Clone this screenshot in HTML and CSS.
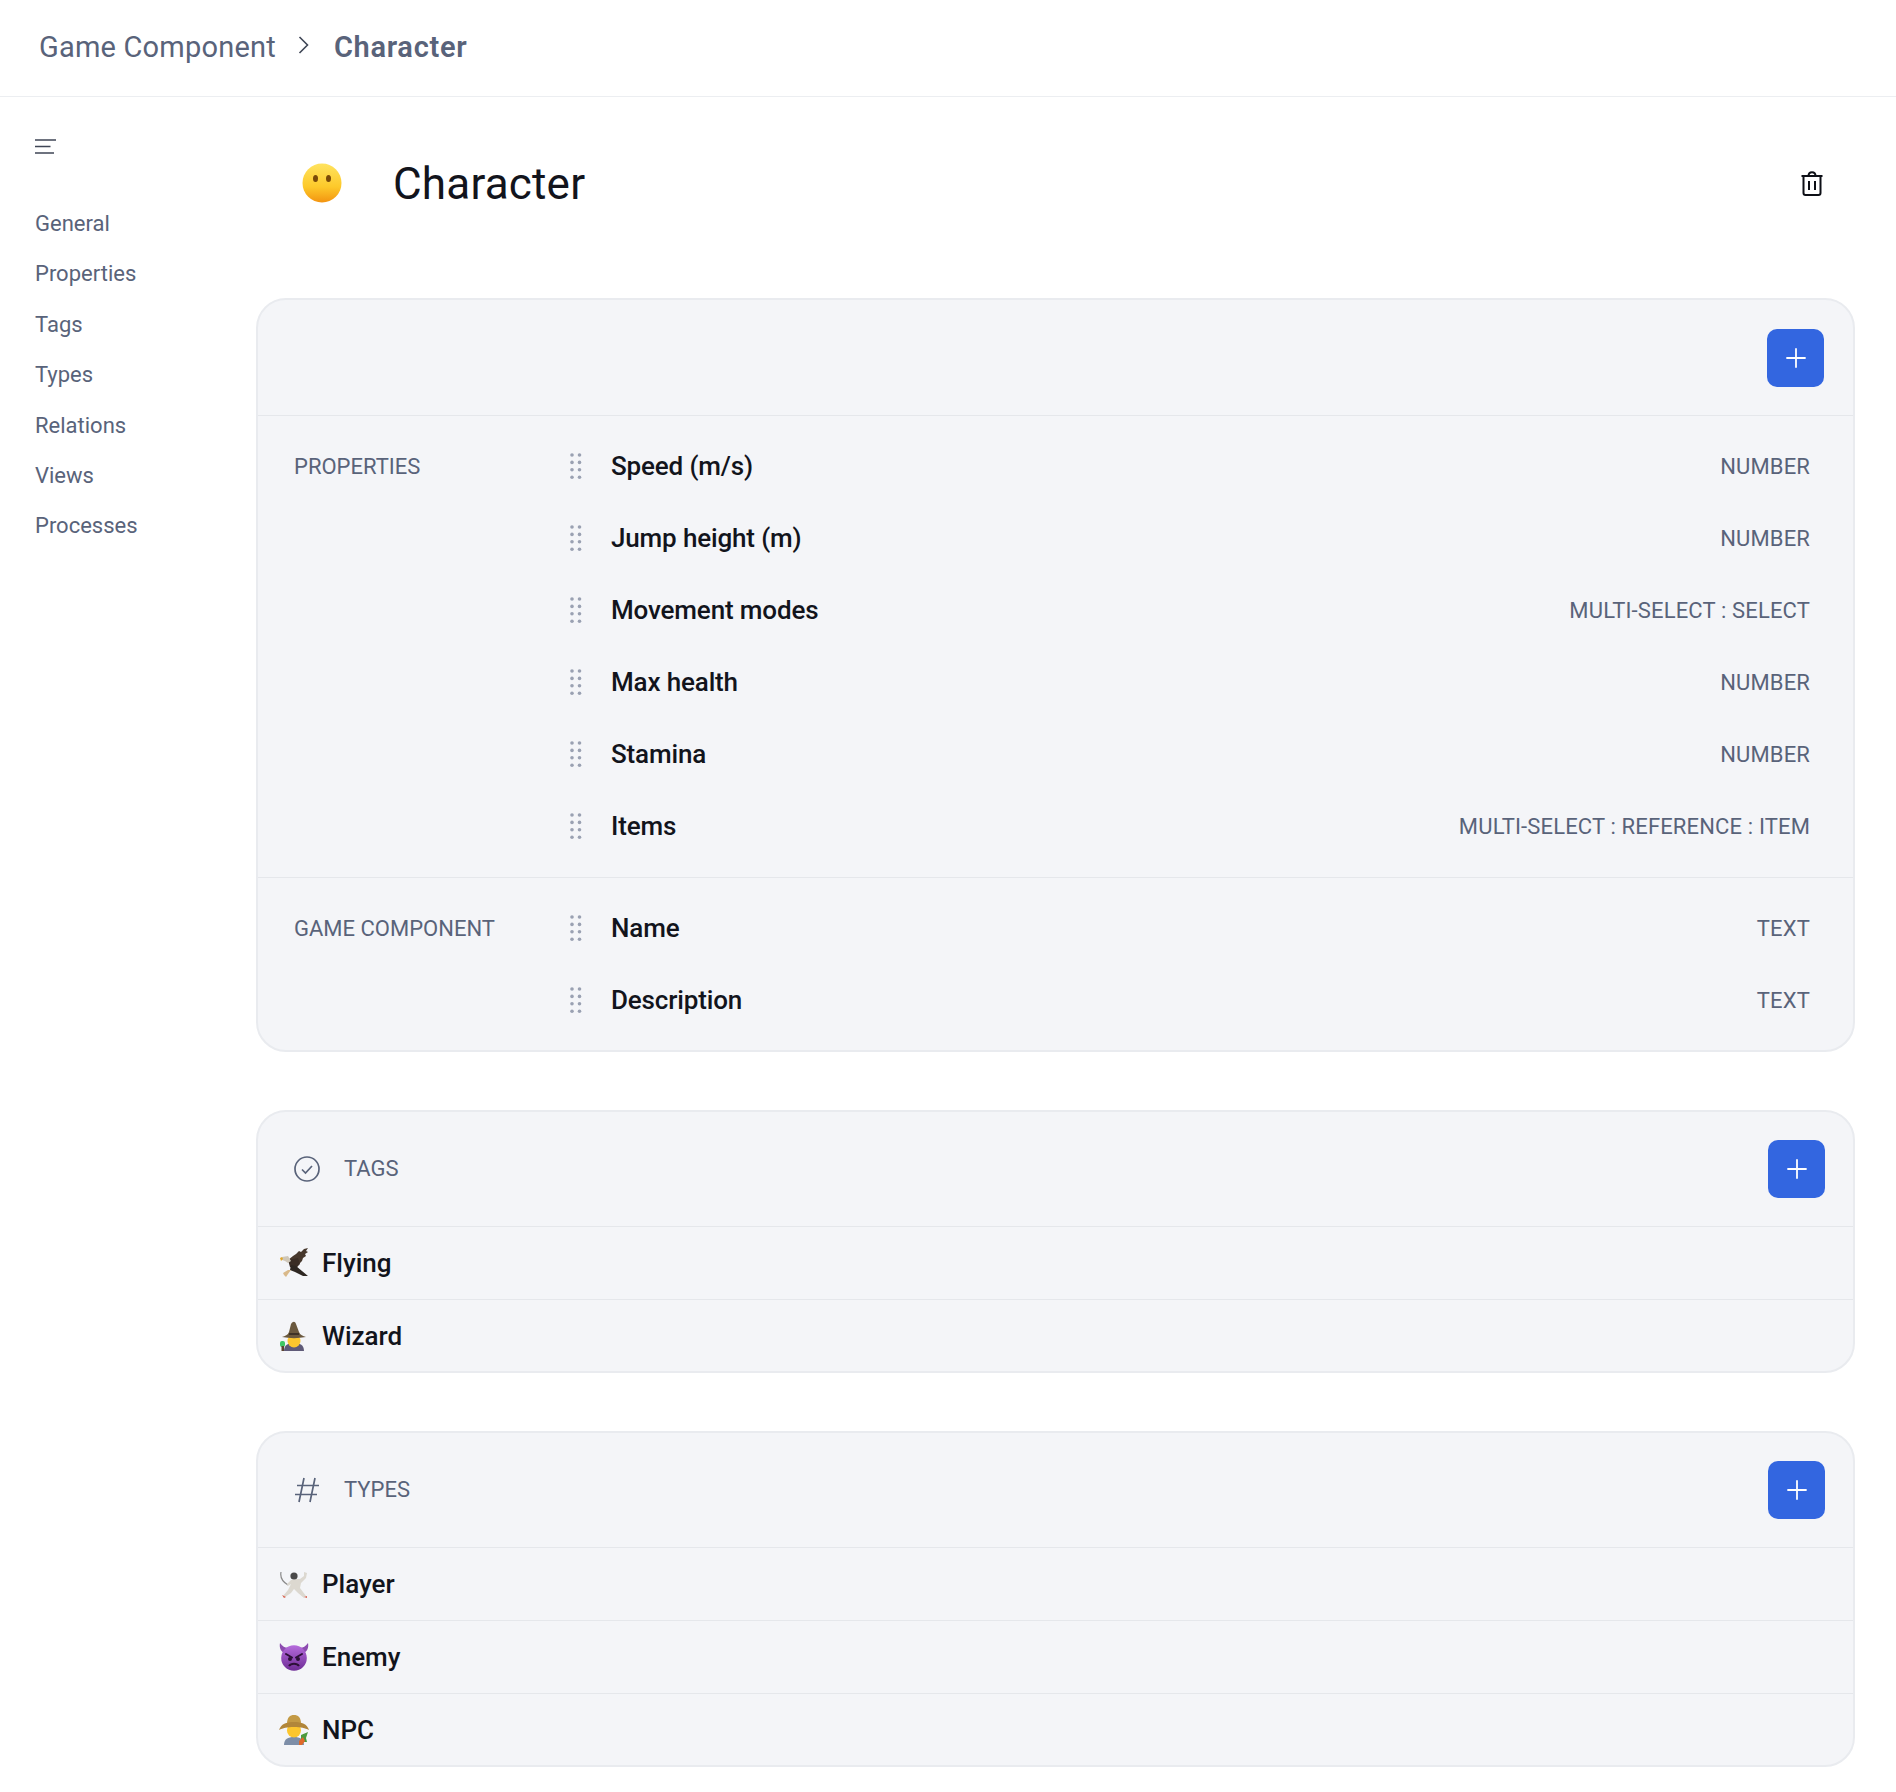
FILE: index.html
```html
<!DOCTYPE html>
<html lang="en">
<head>
<meta charset="utf-8">
<title>Character</title>
<link rel="stylesheet" href="styles.css">
</head>
<body>
<svg class="defs" width="0" height="0" aria-hidden="true">
  <defs>
    <g id="dots" fill="#9aa1b2">
      <circle cx="2" cy="2" r="1.8"/><circle cx="9.5" cy="2" r="1.8"/>
      <circle cx="2" cy="9.4" r="1.8"/><circle cx="9.5" cy="9.4" r="1.8"/>
      <circle cx="2" cy="16.8" r="1.8"/><circle cx="9.5" cy="16.8" r="1.8"/>
      <circle cx="2" cy="24.2" r="1.8"/><circle cx="9.5" cy="24.2" r="1.8"/>
    </g>
    <g id="plus" stroke="#fff" stroke-width="1.8" stroke-linecap="round">
      <path d="M10 1v18M1 10h18"/>
    </g>
    <linearGradient id="skin" x1="0" y1="0" x2="0" y2="1">
      <stop offset="0" stop-color="#ffe35f"/><stop offset="0.6" stop-color="#fdc92a"/><stop offset="1" stop-color="#f39410"/>
    </linearGradient>
    <linearGradient id="imp" x1="0" y1="0" x2="0" y2="1">
      <stop offset="0" stop-color="#b56bdc"/><stop offset="1" stop-color="#6e2c96"/>
    </linearGradient>
  </defs>
</svg>
<header class="topbar">
  <span class="crumb">Game Component</span>
  <svg class="crumb-sep" width="11" height="18" viewBox="0 0 11 18"><path d="M1.5 1 9.500 9 1.5 17" fill="none" stroke="#3f4656" stroke-width="1.6"/></svg>
  <span class="crumb crumb-current">Character</span>
</header>
<div class="layout">
  <nav class="sidenav">
    <svg class="menu-icon" width="22" height="15" viewBox="0 0 22 15"><path d="M0 1h21M0 7.500h15.500M0 14h19" stroke="#3f4656" stroke-width="1.7"/></svg>
    <a class="nav-link">General</a>
    <a class="nav-link">Properties</a>
    <a class="nav-link">Tags</a>
    <a class="nav-link">Types</a>
    <a class="nav-link">Relations</a>
    <a class="nav-link">Views</a>
    <a class="nav-link">Processes</a>
  </nav>
  <main class="content">
    <div class="title-row">
      <svg class="title-emoji" width="40" height="40" viewBox="0 0 40 40">
        <circle cx="20" cy="20" r="19.500" fill="url(#skin)"/>
        <ellipse cx="13.500" cy="15.500" rx="2.500" ry="3.600" fill="#7a4a08"/>
        <ellipse cx="26.500" cy="15.500" rx="2.500" ry="3.600" fill="#7a4a08"/>
      </svg>
      <h1 class="title">Character</h1>
      <svg class="trash" width="22" height="25" viewBox="0 0 22 25" fill="none" stroke="#0d0f16" stroke-width="2">
        <path d="M0.500 5h21M2.500 5v17a2 2 0 0 0 2 2h13a2 2 0 0 0 2-2V5M7.500 5c0-5 7-5 7 0M8 10v9M14 10v9"/>
      </svg>
    </div>

    <section class="card">
      <div class="card-head head-first">
        <button class="add-btn"><svg width="20" height="20" viewBox="0 0 20 20"><use href="#plus"/></svg></button>
      </div>
      <div class="group">
        <div class="group-label">PROPERTIES</div>
        <div class="group-rows">
          <div class="prop"><svg class="grip" width="12" height="27" viewBox="0 0 12 27"><use href="#dots"/></svg><span class="prop-name">Speed (m/s)</span><span class="prop-type">NUMBER</span></div>
          <div class="prop"><svg class="grip" width="12" height="27" viewBox="0 0 12 27"><use href="#dots"/></svg><span class="prop-name">Jump height (m)</span><span class="prop-type">NUMBER</span></div>
          <div class="prop"><svg class="grip" width="12" height="27" viewBox="0 0 12 27"><use href="#dots"/></svg><span class="prop-name">Movement modes</span><span class="prop-type">MULTI-SELECT : SELECT</span></div>
          <div class="prop"><svg class="grip" width="12" height="27" viewBox="0 0 12 27"><use href="#dots"/></svg><span class="prop-name">Max health</span><span class="prop-type">NUMBER</span></div>
          <div class="prop"><svg class="grip" width="12" height="27" viewBox="0 0 12 27"><use href="#dots"/></svg><span class="prop-name">Stamina</span><span class="prop-type">NUMBER</span></div>
          <div class="prop"><svg class="grip" width="12" height="27" viewBox="0 0 12 27"><use href="#dots"/></svg><span class="prop-name">Items</span><span class="prop-type">MULTI-SELECT : REFERENCE : ITEM</span></div>
        </div>
      </div>
      <div class="group">
        <div class="group-label">GAME COMPONENT</div>
        <div class="group-rows">
          <div class="prop"><svg class="grip" width="12" height="27" viewBox="0 0 12 27"><use href="#dots"/></svg><span class="prop-name">Name</span><span class="prop-type">TEXT</span></div>
          <div class="prop"><svg class="grip" width="12" height="27" viewBox="0 0 12 27"><use href="#dots"/></svg><span class="prop-name">Description</span><span class="prop-type">TEXT</span></div>
        </div>
      </div>
    </section>

    <section class="card">
      <div class="card-head">
        <svg class="head-icon" width="26" height="26" viewBox="0 0 26 26" fill="none" stroke="#59637a" stroke-width="1.7"><circle cx="13" cy="13" r="12"/><path d="M8 13.500l3.500 3.500 6.500-7"/></svg>
        <span class="head-label">TAGS</span>
        <button class="add-btn"><svg width="20" height="20" viewBox="0 0 20 20"><use href="#plus"/></svg></button>
      </div>
      <div class="item">
        <svg class="item-emoji" width="30" height="30" viewBox="0 0 30 30">
          <path d="M9 12 14 8 17 6 20 3 22 4 25 1 29 0 27 3 29 4 26 6 27 8 24 10 23 13 20 16 18 19 12 18Z" fill="#46372c"/>
          <path d="M9 12 19 10 21 16 16 21 11 19Z" fill="#3a2d25"/>
          <path d="M12 17 17 18 29 28 24 28 16 24 11 22Z" fill="#2e2722"/>
          <path d="M3 9 9 8 12 13 9 15 6 13 3 12Z" fill="#cfc7b8"/>
          <path d="M3 9 1 10 2 13 4 11Z" fill="#e0a62a"/>
          <path d="M4 25 9 22 12 22 9 26 7 29 5 27Z" fill="#d9b98a"/>
        </svg>
        <span class="item-name">Flying</span>
      </div>
      <div class="item">
        <svg class="item-emoji" width="30" height="30" viewBox="0 0 30 30">
          <path d="M5 30c0-6 4-8 10-8s10 2 10 8Z" fill="#5f5a78"/>
          <circle cx="15" cy="20" r="6.500" fill="#fcc62e"/>
          <path d="M3 16c3-1 6-2 7-5l2-8c2-3 4-3 5 0l3 8c1 3 4 4 7 5-8 1.500-16 1.500-24 0Z" fill="#6a583e"/>
          <rect x="10" y="12" width="10" height="2" fill="#3e3226"/>
          <rect x="1" y="20" width="5" height="6" rx="2" fill="#3fc765"/>
          <rect x="2.500" y="25" width="2.500" height="5" fill="#5c4430"/>
        </svg>
        <span class="item-name">Wizard</span>
      </div>
    </section>

    <section class="card">
      <div class="card-head">
        <svg class="head-icon" width="26" height="26" viewBox="0 0 26 26" fill="none" stroke="#59637a" stroke-width="1.7"><path d="M10 1 5 25M21 1 16 25M3 8.500h22M1 17.500h22"/></svg>
        <span class="head-label">TYPES</span>
        <button class="add-btn"><svg width="20" height="20" viewBox="0 0 20 20"><use href="#plus"/></svg></button>
      </div>
      <div class="item">
        <svg class="item-emoji" width="30" height="30" viewBox="0 0 30 30">
          <path d="M2 3c-1 5 2 10 7 13" fill="none" stroke="#8a8a8a" stroke-width="1.200"/>
          <path d="M8 15 12 11 17 10 21 10 25 7 25 3 28 4 27 9 22 14 21 19 24 23 27 27 25 29 19 24 15 20 12 24 6 28 4 27 9 21 12 15 9 17Z" fill="#dcd8d0"/>
          <circle cx="15" cy="7" r="3.600" fill="#4a4a4a"/>
          <path d="M3 26 7 28 5 29Z M25 28 28 27 28 29Z" fill="#d8604c"/>
        </svg>
        <span class="item-name">Player</span>
      </div>
      <div class="item item-tall">
        <svg class="item-emoji" width="30" height="30" viewBox="0 0 30 30">
          <path d="M1 1C0 6 2 10 6 11L10 6C6 6 3 4 1 1ZM29 1C30 6 28 10 24 11L20 6C24 6 27 4 29 1Z" fill="#8c4bb0"/>
          <circle cx="15" cy="16" r="12.800" fill="url(#imp)"/>
          <path d="M7 12l6 3.500M23 12l-6 3.500" stroke="#2c1038" stroke-width="2" stroke-linecap="round"/>
          <circle cx="11" cy="17" r="2" fill="#2c1038"/><circle cx="19" cy="17" r="2" fill="#2c1038"/>
          <path d="M10 24c2-3 8-3 10 0" fill="none" stroke="#2c1038" stroke-width="2"/>
        </svg>
        <span class="item-name">Enemy</span>
      </div>
      <div class="item">
        <svg class="item-emoji" width="30" height="30" viewBox="0 0 30 30">
          <path d="M5 30c0-6 4-8 10-8s10 2 10 8Z" fill="#7d8ea8"/>
          <circle cx="15" cy="15.500" r="7" fill="#fcc62e"/>
          <path d="M8 9C8 2 11 0 15 0 19 0 22 2 22 9Z" fill="#c39a45"/>
          <path d="M0 15C2 9 7 7 15 7 23 7 28 9 30 15 26 13 22 12 15 12 8 12 4 13 0 15Z" fill="#b1863a"/>
          <path d="M22 20 29 17 27 23 28 27 22 27Z" fill="#4b9a3e"/>
          <path d="M20 26 24 22 26 26 23 30H20Z" fill="#e0692a"/>
        </svg>
        <span class="item-name">NPC</span>
      </div>
    </section>
  </main>
</div>
</body>
</html>
```
FILE: styles.css
```css
* { box-sizing: border-box; }
html, body { margin: 0; padding: 0; background: #fff; }
body { font-family: Roboto, "Liberation Sans", sans-serif; color: #12141c; width: 1896px; height: 1792px; overflow: hidden; }
.defs { display: block; height: 0; }
svg { display: block; flex: none; }

.topbar { height: 97px; display: flex; align-items: center; padding: 0 0 2px 39px; border-bottom: 1px solid #eceef1; }
.crumb { font-size: 29px; color: #59637a; line-height: 1; letter-spacing: 0.2px; }
.crumb-current { font-weight: 600; letter-spacing: 0.7px; }
.crumb-sep { margin: -4px 25px 0 22px; }

.layout { display: flex; }
.sidenav { width: 256px; flex: none; padding: 42px 0 0 35px; display: flex; flex-direction: column; }
.menu-icon { margin-bottom: 45px; }
.nav-link { font-size: 22px; line-height: 50.4px; color: #59637a; }

.content { width: 1599px; padding-top: 41px; display: flex; flex-direction: column; gap: 58px; }

.title-row { height: 90px; margin-bottom: 12px; display: flex; align-items: center; padding: 0 32px 0 46px; }
.title-emoji { margin-right: 51px; }
.title { margin: 2px 0 0; font-size: 44px; font-weight: 450; line-height: 1; color: #12141c; flex: 1; letter-spacing: 0.2px; }

.card { background: #f4f5f8; border: 2px solid #e9ebef; border-radius: 30px; overflow: hidden; }
.card-head { height: 115px; display: flex; align-items: center; padding: 0 28px 0 36px; border-bottom: 1px solid #e5e7eb; }
.head-first { height: 116px; justify-content: flex-end; padding-right: 29px; }
.head-icon { margin-right: 24px; }
.head-label { font-size: 22px; color: #59637a; flex: 1; padding-bottom: 2px; }
.add-btn { width: 57px; height: 58px; border: 0; padding: 0; background: #3366e0; border-radius: 10px; display: flex; align-items: center; justify-content: center; }

.group { display: flex; padding: 14px 43px 15px 36px; }
.group + .group { padding-bottom: 14px; border-top: 1px solid #e5e7eb; }
.group-label { width: 276px; flex: none; font-size: 22px; line-height: 74px; height: 72px; color: #59637a; }
.group-rows { flex: 1; }
.prop { height: 72px; display: flex; align-items: center; }
.grip { margin-right: 29px; }
.prop-name { font-size: 26px; font-weight: 480; flex: 1; color: #12141c; letter-spacing: -0.15px; }
.prop-type { font-size: 22px; color: #59637a; letter-spacing: 0.15px; }

.item { height: 72px; display: flex; align-items: center; padding-left: 21px; border-top: 1px solid #e5e7eb; }
.item-tall { height: 73px; }
.card-head + .item { border-top: 0; }
.item-emoji { margin-right: 13px; }
.item-name { font-size: 26px; font-weight: 480; color: #12141c; }
```
